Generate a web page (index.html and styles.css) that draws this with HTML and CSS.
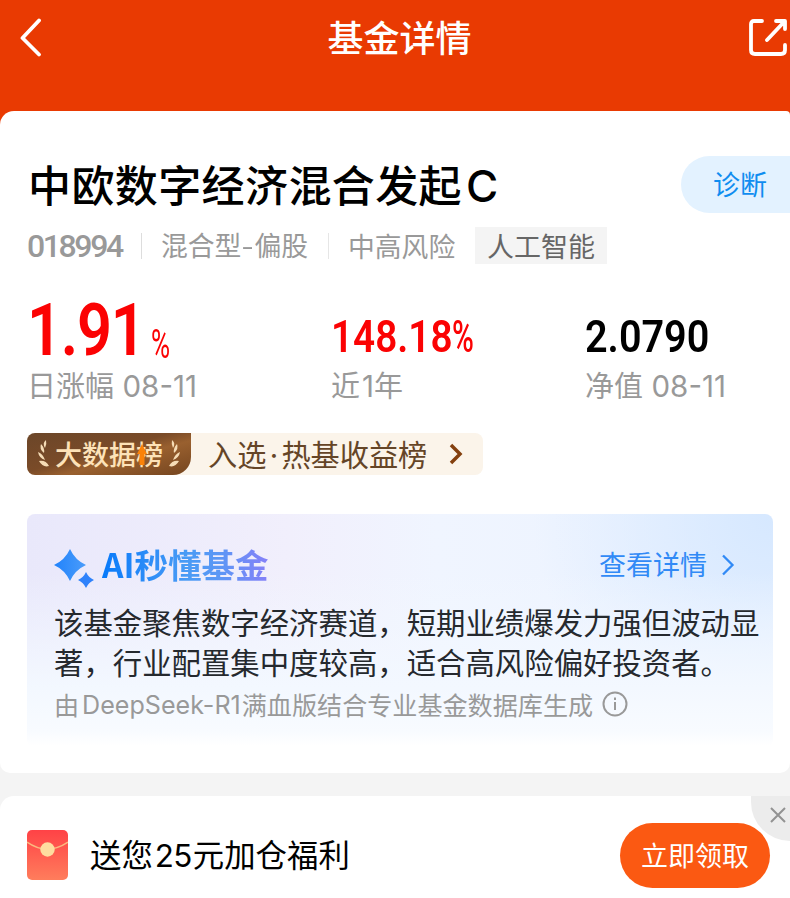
FILE: index.html
```html
<!DOCTYPE html>
<html lang="zh-CN">
<head>
  <meta charset="UTF-8">
  <title>基金详情</title>
  <link rel="stylesheet" href="styles.css">
</head>
<body>
  <header class="header">
    <svg class="back" width="24" height="40" viewBox="0 0 24 40"><path d="M20 2.5 3.5 20 20 36.5"/></svg>
    <h1>基金详情</h1>
    <svg class="share" width="40" height="40" viewBox="0 0 40 40"><path d="M14 3H6Q3 3 3 6V32Q3 36 7 36H33Q37 36 37 32V27M19 22 36 4M28 3H37V11"/></svg>
  </header>

  <main class="card">
    <div class="name-row">
      <h2>中欧数字经济混合发起<span>C</span></h2>
      <a class="diagnose">诊断</a>
    </div>

    <div class="meta">
      <span class="code">018994</span>
      <span class="type">混合型<i>-</i>偏股</span>
      <span class="risk">中高风险</span>
      <span class="tag">人工智能</span>
    </div>

    <div class="stats">
      <div class="stat day">
        <div class="value"><b class="num big">1.91</b><b class="num pct">%</b></div>
        <p>日涨幅 <span>08<i>-</i>11</span></p>
      </div>
      <div class="stat year">
        <div class="value"><b class="num rate">148.18</b><b class="num unit">%</b></div>
        <p>近<span>1</span>年</p>
      </div>
      <div class="stat net">
        <div class="value"><b class="num">2.0790</b></div>
        <p>净值 <span>08<i>-</i>11</span></p>
      </div>
    </div>

    <div class="rank">
      <div class="rank-badge">
        <svg width="11" height="28" viewBox="0 0 11 28"><path d="M8 0Q4 3 7 8Q9 4 8 0M3 4Q1 9 6 13Q7 8 3 4M0 12Q1 18 7 20Q5 14 0 12M1 21Q5 28 11 26Q8 20 1 21"/></svg>
        <span>大数据榜</span>
        <svg class="flip" width="11" height="28" viewBox="0 0 11 28"><path d="M8 0Q4 3 7 8Q9 4 8 0M3 4Q1 9 6 13Q7 8 3 4M0 12Q1 18 7 20Q5 14 0 12M1 21Q5 28 11 26Q8 20 1 21"/></svg>
        <svg class="up" width="10" height="21" viewBox="0 0 10 21"><path d="M5 0 10 10H7.500V21H2.500V10H0Z"/></svg>
      </div>
      <span class="rank-text">入选<i>·</i>热基收益榜</span>
      <svg class="rank-arrow" width="14" height="22" viewBox="0 0 14 22"><path d="M2 2 11 11 2 20"/></svg>
    </div>

    <section class="ai">
      <div class="ai-head">
        <svg class="spark" width="42" height="42" viewBox="0 0 42 42">
          <defs>
            <linearGradient id="star" x1="0" y1="0" x2="1" y2="0">
              <stop offset="0" stop-color="#2183fb"/>
              <stop offset="1" stop-color="#4b9cfa"/>
            </linearGradient>
          </defs>
          <path fill="url(#star)" d="M16 1Q21 12 32 17Q21 22 16 33Q11 22 0 17Q11 12 16 1Z"/>
          <path fill="#2f82fb" d="M32 24Q34.500 29.500 40 32Q34.500 34.500 32 40Q29.500 34.500 24 32Q29.500 29.500 32 24Z"/>
        </svg>
        <h3>AI秒懂基金</h3>
        <a>查看详情</a>
        <svg class="more" width="14" height="22" viewBox="0 0 14 22"><path d="M2 1.500 11.500 11 2 20.500"/></svg>
      </div>
      <p class="ai-text">该基金聚焦数字经济赛道，短期业绩爆发力强但波动显著，行业配置集中度较高，适合高风险偏好投资者。</p>
      <div class="ai-source">
        <span>由</span><span class="model">DeepSeek<i>-</i>R1</span><span>满血版结合专业基金数据库生成</span>
        <svg width="26" height="26" viewBox="0 0 26 26"><circle cx="13" cy="13" r="11.500"/><path d="M13 11V19M13 6.500V9"/></svg>
      </div>
    </section>
  </main>

  <footer class="promo">
    <svg class="packet" width="41" height="50" viewBox="0 0 41 50">
      <defs>
        <linearGradient id="red" x1="0" y1="0" x2="0" y2="1">
          <stop offset="0" stop-color="#ff4246"/>
          <stop offset="1" stop-color="#ff7d5c"/>
        </linearGradient>
      </defs>
      <rect width="41" height="50" rx="5" fill="url(#red)"/>
      <path d="M0 12Q20 26 41 12" fill="none" stroke="#fbb97f" stroke-width="1.500"/>
      <circle cx="20.500" cy="19.500" r="7.200" fill="#fedd9f"/>
    </svg>
    <span class="promo-text">送您<i>25</i>元加仓福利</span>
    <button>立即领取</button>
    <div class="close"><svg width="16" height="16" viewBox="0 0 16 16"><path d="M1 1 15 15M15 1 1 15"/></svg></div>
  </footer>
</body>
</html>
```
FILE: styles.css
```css
* {
  box-sizing: border-box;
}
body {
  margin: 0;
  width: 790px;
  height: 898px;
  overflow: hidden;
  background: #f4f4f4;
  font-family: "Noto Sans CJK SC", sans-serif;
  color: #000;
}
h1, h2, h3, p {
  margin: 0;
  font-weight: 400;
}
i, b {
  font-style: normal;
}
svg {
  display: block;
  flex: none;
  fill: none;
}
.header {
  display: flex;
  justify-content: space-between;
  height: 125px;
  padding: 18px 0 0 19px;
  background: #e93a02;
}
.header path {
  stroke: #fff;
  stroke-width: 3.8;
  stroke-linecap: round;
  stroke-linejoin: round;
}
.header h1 {
  height: 40px;
  margin-left: 8px;
  color: #fff;
  font-size: 36px;
  line-height: 36px;
  font-weight: 500;
}
.share {
  margin-right: 2px;
}
.card {
  height: 662px;
  margin-top: -14px;
  padding: 45px 0 0 27px;
  background: #fff;
  border-radius: 14px 4px 10px 10px;
}
.name-row {
  display: flex;
  justify-content: space-between;
  height: 57px;
}
.name-row h2 {
  padding-left: 1px;
  font-size: 43px;
  line-height: 54px;
  letter-spacing: 0.4px;
  font-weight: 500;
}
.name-row h2 span {
  margin-left: 4px;
  font-family: Inter, sans-serif;
  font-size: 44px;
}
.diagnose {
  width: 109px;
  padding-left: 32px;
  border-radius: 29px 0 0 29px;
  background: #e3f2ff;
  color: #0f8df0;
  font-size: 27px;
  line-height: 56px;
}
.meta {
  display: flex;
  align-items: center;
  height: 37px;
  margin-top: 14px;
  color: #999;
  font-size: 26.8px;
  line-height: 35px;
}
.code {
  width: 115px;
  height: 26px;
  border-right: 1px solid #ddd;
  font: 500 32px/26px Roboto, sans-serif;
  letter-spacing: -2.4px;
}
.type {
  width: 187px;
  height: 26px;
  padding-left: 19px;
  border-right: 1px solid #e6e6e6;
  line-height: 23px;
}
.type i {
  display: inline-block;
  width: 13px;
  text-align: center;
  transform: scaleX(1.3);
}
.risk {
  width: 146px;
  padding-left: 19px;
}
.tag {
  width: 132px;
  padding-left: 12px;
  background: #f4f4f4;
  color: #666;
  font-size: 27px;
  line-height: 37px;
}
.stats {
  display: flex;
  height: 169px;
  padding-top: 26px;
}
.day {
  width: 304px;
}
.year {
  width: 254px;
}
.value {
  display: flex;
  align-items: flex-end;
  height: 75px;
}
.num {
  transform-origin: left;
  transform: scaleX(0.88);
  font: 600 45px/56px Roboto, sans-serif;
}
.day .num, .year .num {
  color: #fb0203;
}
.value .big {
  width: 124px;
  font-size: 73px;
  line-height: 70px;
  letter-spacing: -1.5px;
  transform: scaleX(0.84);
}
.value .pct {
  font-size: 40px;
  font-weight: 400;
  line-height: 40px;
  transform: scaleX(0.65);
}
.value .rate {
  width: 121px;
  transform: scaleX(0.86);
}
.value .unit {
  font-weight: 500;
  transform: scaleX(0.66);
}
.stat p {
  padding-top: 1px;
  color: #999;
  font-size: 29px;
  line-height: 36px;
  white-space: nowrap;
}
.stat p span {
  margin-left: 2px;
  font-family: Inter, sans-serif;
  font-size: 29.5px;
}
.rank {
  display: flex;
  align-items: center;
  width: 456px;
  height: 42px;
  border-radius: 8px;
  background: #fbf4ea;
}
.rank-badge {
  position: relative;
  display: flex;
  align-items: center;
  gap: 6px;
  width: 164px;
  height: 42px;
  padding-left: 11px;
  border-radius: 8px 0 18px 8px;
  background: linear-gradient(165deg, #6b4629, #7a4b28 45%, #99602f 60%, #75451f);
  color: #fde2b8;
  font-size: 27px;
  font-weight: 500;
  line-height: 40px;
}
.rank-badge path {
  fill: #f5dcb6;
}
.flip {
  transform: scaleX(-1);
}
.rank-badge .up {
  position: absolute;
  left: 110px;
  top: 11px;
}
.rank-badge .up path {
  fill: #fb8208;
}
.rank-text {
  margin-left: 17px;
  color: #654527;
  font-size: 29.2px;
  line-height: 40px;
}
.rank-text i {
  display: inline-block;
  width: 15px;
  font-family: Inter, sans-serif;
  text-align: center;
}
.rank-arrow {
  margin-left: 22px;
  stroke: #84400f;
  stroke-width: 3.5;
}
.ai {
  width: 746px;
  height: 232px;
  margin-top: 39px;
  padding: 32px 12px 0 27px;
  border-radius: 8px;
  background:
    linear-gradient(to bottom, rgba(243, 248, 255, 0) 25%, #f3f8ff 75%, #f8fbff 94%, #fff),
    radial-gradient(circle at 100% 0, #d6e8ff, rgba(226, 238, 255, 0) 240px),
    linear-gradient(to right, #e9e8fb, #f1effc 35%, #f0f5ff 55%, #eaf2ff);
}
.ai-head {
  display: flex;
  height: 42px;
}
.spark {
  margin-top: 2px;
}
.ai-head h3 {
  height: 40px;
  margin-left: 6px;
  font-size: 33.5px;
  line-height: 35px;
  font-weight: 700;
  background: linear-gradient(to right, #087afa, #499bf5 50%, #5c97f5 70%, #8580f8);
  -webkit-background-clip: text;
  color: transparent;
}
.ai-head a {
  margin-left: auto;
  color: #318af6;
  font-size: 27px;
  line-height: 36px;
}
.more {
  margin: 8px 26px 0 14px;
  stroke: #318af6;
  stroke-width: 2.3;
}
.ai-text {
  margin-top: 14px;
  color: #25292e;
  font-size: 29.4px;
  line-height: 39.5px;
}
.ai-source {
  display: flex;
  align-items: center;
  height: 30px;
  margin-top: 8px;
  color: #999;
  font-size: 25.1px;
  line-height: 30px;
}
.model {
  margin: 2px 1px 0 3px;
  font-family: Inter, sans-serif;
}
.ai-source svg {
  margin-left: 9px;
  stroke: #999;
  stroke-width: 2;
}
.promo {
  position: relative;
  display: flex;
  align-items: center;
  height: 118px;
  margin-top: 23px;
  padding: 0 20px 0 27px;
  background: #fff;
  border-radius: 14px 0 0 0;
  overflow: hidden;
}
.promo-text {
  margin: -4px 0 0 22px;
  font-size: 31.4px;
}
.promo-text i {
  margin: 0 1px 0 2px;
  font-family: Inter, sans-serif;
  letter-spacing: -0.6px;
}
.promo button {
  width: 150px;
  height: 65px;
  margin-left: auto;
  padding: 0 0 1px;
  border: 0;
  border-radius: 33px;
  background: #fb5912;
  color: #fff;
  font: 27px "Noto Sans CJK SC", sans-serif;
}
.close {
  position: absolute;
  right: 0;
  top: 0;
  width: 39px;
  height: 45px;
  padding: 11px 0 0 19px;
  border-radius: 0 0 0 42px;
  background: #ececec;
}
.close svg {
  stroke: #929292;
  stroke-width: 2;
}
```
